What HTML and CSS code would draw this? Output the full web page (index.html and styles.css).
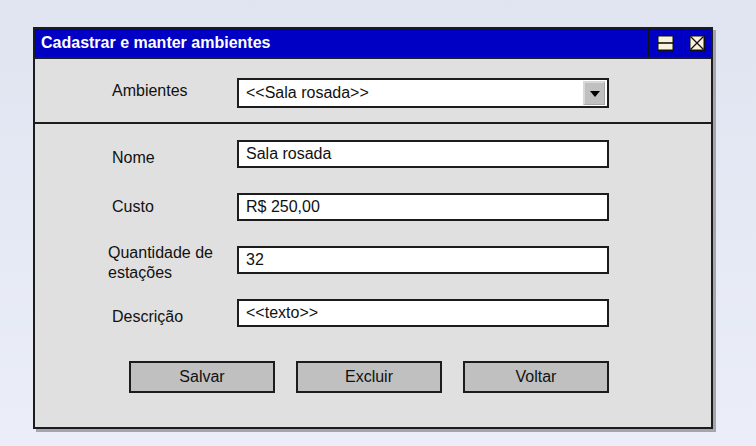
FILE: index.html
```html
<!DOCTYPE html>
<html lang="pt">
<head>
<meta charset="utf-8">
<title>Cadastrar e manter ambientes</title>
<link rel="stylesheet" href="styles.css">
</head>
<body>
<div class="window">
  <div class="titlebar">
    <div class="title">Cadastrar e manter ambientes</div>
    <div class="tb-cell">
      <svg width="17" height="16" viewBox="0 0 17 16"><rect x="0.75" y="0.75" width="15.5" height="14.5" fill="#fbf2dc" stroke="#111" stroke-width="1.5"/><line x1="1" y1="8" x2="16" y2="8" stroke="#111" stroke-width="1.6"/></svg>
    </div>
    <div class="tb-cell">
      <svg width="16" height="16" viewBox="0 0 16 16"><rect x="0.75" y="0.75" width="14.5" height="14.5" fill="#fbf2dc" stroke="#111" stroke-width="1.5"/><path d="M1.5 1.5 L14.5 14.5 M14.5 1.5 L1.5 14.5" stroke="#111" stroke-width="1.3"/></svg>
    </div>
  </div>
  <div class="top">
    <div class="row">
      <div class="label high">Ambientes</div>
      <div class="select">
        <span class="value">&lt;&lt;Sala rosada&gt;&gt;</span>
        <span class="arrow"><svg width="10" height="6" viewBox="0 0 10 6"><path d="M0 0 H10 L5 6 Z" fill="#000"/></svg></span>
      </div>
    </div>
  </div>
  <div class="form">
    <div class="row">
      <div class="label low">Nome</div>
      <div class="field">Sala rosada</div>
    </div>
    <div class="row">
      <div class="label">Custo</div>
      <div class="field">R$ 250,00</div>
    </div>
    <div class="row">
      <div class="label wide">Quantidade de<br>estações</div>
      <div class="field">32</div>
    </div>
    <div class="row">
      <div class="label low">Descrição</div>
      <div class="field">&lt;&lt;texto&gt;&gt;</div>
    </div>
    <div class="buttons">
      <div class="btn">Salvar</div>
      <div class="btn">Excluir</div>
      <div class="btn">Voltar</div>
    </div>
  </div>
</div>
</body>
</html>
```

FILE: styles.css
```css
html, body {
  margin: 0;
  padding: 0;
}
body {
  width: 756px;
  height: 446px;
  box-sizing: border-box;
  padding: 27px 0 0 33px;
  background: linear-gradient(#dfe4f0, #ebeef8);
  font-family: "Liberation Sans", Arial, sans-serif;
  color: #111;
  overflow: hidden;
}
.window {
  width: 680px;
  height: 402px;
  box-sizing: border-box;
  border: 2px solid #1c1c1c;
  background: #e0e0e0;
  box-shadow: 3px 3px 0 #a4a6ae;
  display: flex;
  flex-direction: column;
}
.titlebar {
  height: 28px;
  background: #0000c4;
  border-bottom: 2px solid #1c1c2c;
  display: flex;
  align-items: stretch;
  flex: none;
}
.title {
  flex: 1;
  color: #fff;
  font-weight: bold;
  font-size: 16px;
  line-height: 28px;
  padding-left: 6px;
}
.tb-cell {
  width: 32px;
  border-left: 1px solid #111;
  display: flex;
  align-items: center;
  justify-content: center;
}
.tb-cell + .tb-cell {
  width: 29px;
}
.top {
  height: 65px;
  border-bottom: 2px solid #1c1c1c;
  padding: 19px 0 0 77px;
  box-sizing: border-box;
  flex: none;
}
.row {
  display: flex;
  align-items: center;
  height: 28px;
}
.top .row {
  height: 30px;
}
.label {
  width: 125px;
  flex: none;
  font-size: 16px;
  line-height: 20px;
}
.label.low {
  padding-top: 7px;
}
.label.high {
  padding-bottom: 4px;
}
.label.wide {
  margin-left: -4px;
  width: 129px;
  padding-top: 5px;
}
.select {
  width: 372px;
  height: 30px;
  box-sizing: border-box;
  border: 2px solid #1c1c1c;
  background: #fff;
  display: flex;
  align-items: center;
  justify-content: space-between;
  font-size: 16px;
  padding-left: 7px;
  padding-right: 2px;
}
.arrow {
  width: 22px;
  height: 24px;
  box-sizing: border-box;
  background: #c0c0c0;
  border-top: 2px solid #d8d8d8;
  border-left: 2px solid #d8d8d8;
  border-right: 1px solid #a8a8a8;
  border-bottom: 1px solid #a8a8a8;
  display: flex;
  align-items: center;
  justify-content: center;
}
.form {
  flex: 1;
  padding: 16px 0 0 77px;
  display: flex;
  flex-direction: column;
  gap: 25px;
}
.field {
  width: 372px;
  height: 28px;
  box-sizing: border-box;
  border: 2px solid #1c1c1c;
  background: #fff;
  font-size: 16px;
  line-height: 24px;
  padding-left: 7px;
}
.buttons {
  display: flex;
  gap: 21px;
  margin-top: 9px;
  padding-left: 17px;
}
.btn {
  width: 146px;
  height: 32px;
  box-sizing: border-box;
  border: 2px solid #1c1c1c;
  background: #c0c0c0;
  font-size: 16px;
  line-height: 28px;
  text-align: center;
}
```
